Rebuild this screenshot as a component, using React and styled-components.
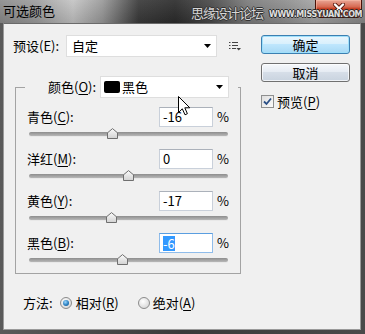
import React from 'react';
import styled, { createGlobalStyle } from 'styled-components';

const Global = createGlobalStyle`
  html, body { margin: 0; padding: 0; background: #fff; }
  body {
    font-family: "Noto Sans CJK SC", "Microsoft YaHei", sans-serif;
    font-size: 13px;
    color: #000;
  }
  #root { width: 365px; height: 334px; }
`;

const Window = styled.div`
  position: relative;
  width: 365px;
  height: 334px;
  display: flex;
  flex-direction: column;
  background: linear-gradient(90deg, #5a5a5a 0%, #3a3a3a 50%, #4a4a4a 100%);
  overflow: hidden;
`;

const TitleBar = styled.div`
  position: relative;
  flex: none;
  height: 23px;
  display: flex;
  align-items: flex-start;
  background:
    linear-gradient(180deg, rgba(255,255,255,0.08), rgba(0,0,0,0.12)),
    linear-gradient(90deg, #8c8c8c 0%, #9e9e9e 10%, #c4c4c4 20%, #9a9a9a 28%, #3a3a3a 38%, #2c2c2c 48%, #4a4a4a 58%, #7c7c7c 68%, #8e8e8e 78%, #a4a4a4 86%, #8a8a8a 100%);
`;

const TitleText = styled.div`
  padding-left: 3px;
  line-height: 22px;
  font-size: 13px;
  color: #000;
`;

const Watermark = styled.div`
  position: absolute;
  z-index: 2;
  left: 191px;
  top: 5px;
  display: flex;
  align-items: flex-end;
  white-space: nowrap;
  pointer-events: none;
`;

const WatermarkCn = styled.span`
  font-size: 13px;
  letter-spacing: -1px;
  line-height: 16px;
  color: #d6d6d6;
  text-shadow: -1px 0 0 #333, 1px 0 0 #333, 0 -1px 0 #333, 0 1px 0 #333;
`;

const WatermarkEn = styled.span`
  margin-left: 6px;
  font-family: "DejaVu Sans", sans-serif;
  font-weight: bold;
  font-size: 8px;
  letter-spacing: -0.4px;
  line-height: 12px;
  color: #e0e0e0;
  text-shadow: -1px 0 0 #2a2a2a, 1px 0 0 #2a2a2a, 0 -1px 0 #2a2a2a, 0 1px 0 #2a2a2a;
`;

const CloseButton = styled.div`
  margin-left: auto;
  margin-right: 3px;
  width: 47px;
  height: 18px;
  box-sizing: border-box;
  border: 1px solid #4a1208;
  border-top: none;
  border-radius: 0 0 5px 5px;
  background: linear-gradient(180deg, #e9a696 0%, #d66a52 40%, #c23a1e 52%, #c8442a 75%, #e07a5c 100%);
  box-shadow: inset 0 0 0 1px rgba(255,200,180,0.45);
  display: flex;
  align-items: center;
  justify-content: center;
`;

const FrameBody = styled.div`
  flex: 1;
  display: flex;
  padding: 0 4px 4px 3px;
`;

const Client = styled.div`
  flex: 1;
  display: flex;
  align-items: flex-start;
  background: #f0f0f0;
  border: 1px solid #9a9a9a;
  border-top-color: #6a6a6a;
`;

const LeftCol = styled.div`
  width: 228px;
  padding-left: 9px;
  display: flex;
  flex-direction: column;
  align-items: flex-start;
`;

const RightCol = styled.div`
  margin-left: 20px;
  margin-top: 11px;
  width: 89px;
  display: flex;
  flex-direction: column;
`;

const PresetRow = styled.div`
  margin-top: 11px;
  height: 22px;
  display: flex;
  align-items: center;
`;

const Label = styled.span`
  width: ${p => p.$w || 'auto'};
  flex: none;
  line-height: 18px;
  white-space: nowrap;
`;

const Key = styled.u`
  text-decoration: underline;
  text-underline-offset: 2px;
  text-decoration-thickness: 1px;
`;

const SelectBox = styled.div`
  width: ${p => p.$w}px;
  height: 22px;
  box-sizing: border-box;
  border: 1px solid #dedede;
  background: #fff;
  display: flex;
  align-items: center;
  padding: 0 5px 0 ${p => p.$pl || 5}px;
`;

const SelectText = styled.span`
  flex: 1;
  line-height: 18px;
`;

const Swatch = styled.span`
  width: 16px;
  height: 12px;
  border-radius: 2px;
  background: #000;
  margin-right: 2px;
`;

const Arrow = () => (
  <svg width="7" height="4" viewBox="0 0 7 4"><path d="M0 0H7L3.5 4Z" fill="#000" /></svg>
);

const MenuIcon = styled.svg`
  margin-left: 12px;
  flex: none;
`;

const Group = styled.fieldset`
  margin: 19px 0 0 2px;
  width: 226px;
  min-width: 0;
  box-sizing: border-box;
  border: 1px solid #a3a3a3;
  padding: 9px 11px 6px 11px;
  display: flex;
  flex-direction: column;
  gap: 8px;
`;

const Legend = styled.legend`
  margin-left: -2px;
  padding: 0 9px 0 23px;
  height: 22px;
  display: flex;
  align-items: center;
`;

const Row = styled.div`
  display: flex;
  flex-direction: column;
  height: 34px;
`;

const RowTop = styled.div`
  height: 20px;
  display: flex;
  align-items: center;
`;

const InputBox = styled.div`
  margin-left: auto;
  width: 54px;
  height: 20px;
  box-sizing: border-box;
  border: 1px solid ${p => (p.$focused ? '#8fbcea' : '#c9d0da')};
  border-top-color: ${p => (p.$focused ? '#5a9ee0' : '#abb1ba')};
  background: #fff;
  padding-left: 3px;
  display: flex;
  align-items: center;
  line-height: 16px;
`;

const Selected = styled.span`
  background: #3399ff;
  color: #fff;
  line-height: 15px;
`;

const Percent = styled.span`
  width: 16px;
  text-align: right;
  line-height: 18px;
`;

const SliderZone = styled.div`
  position: relative;
  height: 14px;
  margin: 0 1px 0 2px;
`;

const Track = styled.div`
  position: absolute;
  left: 0;
  right: 0;
  top: 5px;
  height: 4px;
  border-radius: 2px;
  background: linear-gradient(180deg, #8d8d8d, #b8b8b8);
  box-shadow: 0 1px 0 #e8e8e8;
`;

const Thumb = styled.svg`
  position: absolute;
  top: 1px;
  margin-left: -5.5px;
`;

const MethodRow = styled.div`
  margin-top: 19px;
  padding-left: 10px;
  height: 20px;
  display: flex;
  align-items: center;
`;

const RadioItem = styled.div`
  display: flex;
  align-items: center;
  margin-left: ${p => p.$ml}px;
`;

const RadioCircle = styled.span`
  width: 12px;
  height: 12px;
  box-sizing: border-box;
  border-radius: 50%;
  border: 1px solid #8b8b8b;
  background: radial-gradient(circle at 40% 35%, #ffffff 0%, #e6e6e6 50%, #cfcfcf 100%);
  display: flex;
  align-items: center;
  justify-content: center;
  margin-right: ${p => p.$mr}px;
`;

const RadioDot = styled.span`
  width: 6px;
  height: 6px;
  border-radius: 50%;
  background: radial-gradient(circle at 40% 35%, #9ad8ff 0%, #2a7fc0 55%, #0f4f86 100%);
`;

const Button = styled.div`
  height: 19px;
  box-sizing: border-box;
  border-radius: 3px;
  border: 1px solid ${p => (p.$default ? '#3c7fb1' : '#707070')};
  background: ${p =>
    p.$default
      ? 'linear-gradient(180deg, #eaf6fd 0%, #d9f0fc 45%, #bee6fd 50%, #a7d9f5 100%)'
      : 'linear-gradient(180deg, #f6f8fb 0%, #e6ecf3 45%, #d6dee8 50%, #c9d3df 100%)'};
  box-shadow: inset 0 0 0 1px ${p => (p.$default ? '#9fe0fb' : 'rgba(255,255,255,0.7)')};
  display: flex;
  align-items: center;
  justify-content: center;
  line-height: 16px;
  margin-top: ${p => p.$mt || 0}px;
`;

const CheckRow = styled.div`
  margin-top: 13px;
  display: flex;
  align-items: center;
  height: 13px;
`;

const CheckBox = styled.span`
  width: 13px;
  height: 13px;
  box-sizing: border-box;
  border: 1px solid #8e8f8f;
  background: linear-gradient(135deg, #dedede, #fbfbfb);
  display: flex;
  align-items: center;
  justify-content: center;
  margin-right: 3px;
`;

const Cursor = styled.svg`
  position: absolute;
  left: 178px;
  top: 96px;
`;

const sliders = [
  { label: '青色', key: 'C', value: -16 },
  { label: '洋红', key: 'M', value: 0 },
  { label: '黄色', key: 'Y', value: -17 },
  { label: '黑色', key: 'B', value: -6, focused: true },
];

function SliderRow({ label, k, value, focused }) {
  const pct = ((value + 100) / 200) * 100;
  return (
    <Row>
      <RowTop>
        <Label>
          {label}(<Key>{k}</Key>):
        </Label>
        <InputBox $focused={focused}>
          {focused ? <Selected>{value}</Selected> : value}
        </InputBox>
        <Percent>%</Percent>
      </RowTop>
      <SliderZone>
        <Track />
        <Thumb width="11" height="11" viewBox="0 0 11 11" style={{ left: `${pct}%` }}>
          <defs>
            <linearGradient id={`tg${k}`} x1="0" y1="0" x2="0" y2="1">
              <stop offset="0" stopColor="#fbfbfb" />
              <stop offset="1" stopColor="#d2d2d2" />
            </linearGradient>
          </defs>
          <path d="M0.5 10.5V4.8L5.5 0.6L10.5 4.8V10.5Z" fill={`url(#tg${k})`} stroke="#6f6f6f" />
        </Thumb>
      </SliderZone>
    </Row>
  );
}

export default function App() {
  return (
    <>
      <Global />
      <Window>
        <TitleBar>
          <TitleText>可选颜色</TitleText>
          <Watermark>
            <WatermarkCn>思缘设计论坛</WatermarkCn>
            <WatermarkEn>WWW.MISSYUAN.COM</WatermarkEn>
          </Watermark>
          <CloseButton>
            <svg width="14" height="11" viewBox="0 0 14 11">
              <path d="M3 1.5L11 9.5M11 1.5L3 9.5" stroke="#5a1a10" strokeWidth="4" strokeLinecap="round" />
              <path d="M3 1.5L11 9.5M11 1.5L3 9.5" stroke="#fff" strokeWidth="2.4" strokeLinecap="round" />
            </svg>
          </CloseButton>
        </TitleBar>
        <FrameBody>
          <Client>
            <LeftCol>
              <PresetRow>
                <Label $w="53px">预设(E):</Label>
                <SelectBox $w={151}>
                  <SelectText>自定</SelectText>
                  <Arrow />
                </SelectBox>
                <MenuIcon width="12" height="10" viewBox="0 0 12 10">
                  <path d="M0 1.5H1.5M3 1.5H9M0 4.5H1.5M3 4.5H9M0 7.5H1.5M3 7.5H7" stroke="#444" strokeWidth="1" />
                  <path d="M7.5 7H12L9.75 9.5Z" fill="#444" />
                </MenuIcon>
              </PresetRow>

              <Group>
                <Legend>
                  <Label $w="52px">
                    颜色(<Key>O</Key>):
                  </Label>
                  <SelectBox $w={129} $pl={3}>
                    <Swatch />
                    <SelectText>黑色</SelectText>
                    <Arrow />
                  </SelectBox>
                </Legend>
                {sliders.map(s => (
                  <SliderRow key={s.key} label={s.label} k={s.key} value={s.value} focused={s.focused} />
                ))}
              </Group>

              <MethodRow>
                <Label>方法:</Label>
                <RadioItem $ml={7}>
                  <RadioCircle $mr={4}>
                    <RadioDot />
                  </RadioCircle>
                  <Label>
                    相对(<Key>R</Key>)
                  </Label>
                </RadioItem>
                <RadioItem $ml={19}>
                  <RadioCircle $mr={3} />
                  <Label>
                    绝对(<Key>A</Key>)
                  </Label>
                </RadioItem>
              </MethodRow>
            </LeftCol>

            <RightCol>
              <Button $default>确定</Button>
              <Button $mt={9}>取消</Button>
              <CheckRow>
                <CheckBox>
                  <svg width="9" height="9" viewBox="0 0 9 9">
                    <path d="M1 4.5L3.5 7L8 1.5" fill="none" stroke="#2a4f86" strokeWidth="1.8" />
                  </svg>
                </CheckBox>
                <Label>
                  预览(<Key>P</Key>)
                </Label>
              </CheckRow>
            </RightCol>
          </Client>
        </FrameBody>
        <Cursor width="13" height="20" viewBox="0 0 13 20">
          <path d="M0.5 0.5V16.5L4.3 12.8L7 18.8L9.4 17.7L6.8 11.8H11.8Z" fill="#fff" stroke="#000" strokeWidth="1" strokeLinejoin="miter" />
        </Cursor>
      </Window>
    </>
  );
}
